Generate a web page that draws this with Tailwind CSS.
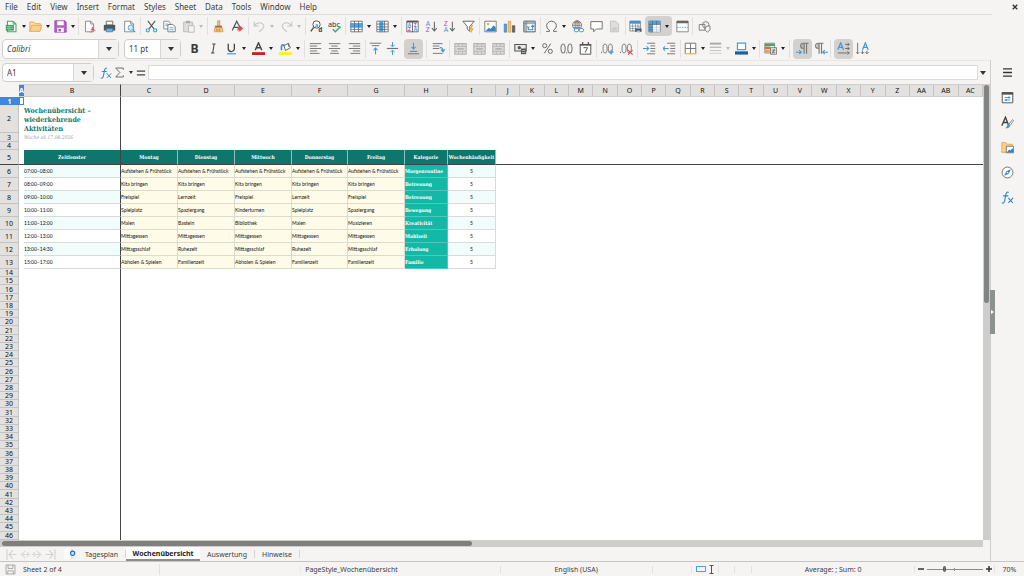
<!DOCTYPE html>
<html lang="de">
<head>
<meta charset="utf-8">
<title>Wochenübersicht</title>
<script src="https://cdn.jsdelivr.net/npm/@tailwindcss/browser@4"></script>
</head>
<body class="h-screen overflow-hidden flex flex-col bg-[#f5f4f2] text-[#3d3d3d] font-['Noto_Sans',sans-serif] text-[8px] leading-none">

<svg class="hidden" fill="none">
  <defs>
    <symbol id="new" viewBox="0 0 16 16"><path d="M3 1.500h7l3.500 3.500v9.500H3z" fill="#fff" stroke="#4ba36a" stroke-width="1.300"/><path d="M10 1.500V5h3.500" fill="none" stroke="#4ba36a" stroke-width="1.200"/><path d="M1 6h10v7H1z" fill="#3f9d63"/><path d="M2 8.200h8M2 10.500h8M5 7v5" stroke="#b9e6c8" stroke-width=".7"/></symbol>
    <symbol id="open" viewBox="0 0 16 16"><path d="M1 14V2.500h5l1.500 2H14V6" fill="#fbe0ad" stroke="#e2a448"/><path d="M1 14 3.500 6.500H16L13.500 14z" fill="#fbd08a" stroke="#e2a448"/></symbol>
    <symbol id="save" viewBox="0 0 16 16"><path d="M1 1h12.500L15 2.500V15H1z" fill="#b45fc6" stroke="#9a48ae"/><path d="M4 1.500h8v5H4z" fill="#fff"/><path d="M4 9.500h8V15H4z" fill="#fff"/><path d="M5.500 11h3v3h-3z" fill="#9a48ae"/></symbol>
    <symbol id="pdf" viewBox="0 0 16 16"><path d="M3 1.500h6.500L13 5v9.500H3z" fill="#fff" stroke="#777"/><path d="M9.500 1.500V5H13" fill="none" stroke="#777"/><path d="M9.500 15.500c2-2 2.500-4 2-7M9.500 11.500c2-.5 4 0 5.500 2" fill="none" stroke="#d9434e" stroke-width="1.200"/></symbol>
    <symbol id="print" viewBox="0 0 16 16"><path d="M4 1.500h8V6H4z" fill="#fff" stroke="#555"/><path d="M1 6h14v7H1z" fill="#555"/><path d="M4 10.500h8v4H4z" fill="#67b5ea" stroke="#3b7fb4"/></symbol>
    <symbol id="preview" viewBox="0 0 16 16"><path d="M2 1.500h7.500L13 5v9.500H2z" fill="#fff" stroke="#777"/><path d="M9.500 1.500V5H13" fill="none" stroke="#777"/><circle cx="9.500" cy="9.500" r="3.200" fill="#d6ecfa" stroke="#3a9bdc"/><path d="m12 12 3 3" stroke="#3a9bdc" stroke-width="1.500"/></symbol>
    <symbol id="cut" viewBox="0 0 16 16"><path d="M3.500 1 11 11M12.500 1 5 11" stroke="#555" stroke-width="1.300"/><circle cx="3.500" cy="12.700" r="2" fill="none" stroke="#3a9bdc" stroke-width="1.300"/><circle cx="12.500" cy="12.700" r="2" fill="none" stroke="#3a9bdc" stroke-width="1.300"/></symbol>
    <symbol id="copy" viewBox="0 0 16 16"><path d="M1 1.500h6L9 4v7H1z" fill="#fff" stroke="#777"/><path d="M6 5.500h6L15 8v6.500H6z" fill="#fff" stroke="#666"/><path d="M3 5h3M3 7h3" stroke="#3a9bdc"/><path d="M8 9.500h5M8 12h5" stroke="#3a9bdc"/></symbol>
    <symbol id="paste" viewBox="0 0 16 16"><path d="M2 2.500h11v12H2z" fill="#dededd" stroke="#b5b5b5"/><path d="M5 1h5v3H5z" fill="#aaa"/><path d="M8 7h7v8H8z" fill="#f3f3f3" stroke="#b5b5b5"/></symbol>
    <symbol id="clone" viewBox="0 0 16 16"><path d="M7 1h2.500v6H7z" fill="#f3c98c" stroke="#c27b2b" stroke-width=".8"/><path d="M3.500 7h9v2.500h-9z" fill="#777"/><path d="M3.500 9.500h9l1 5h-11z" fill="#f9c475" stroke="#d98a32" stroke-width=".8"/><path d="M6 11v3M9 11v3" stroke="#c2662b"/></symbol>
    <symbol id="clear" viewBox="0 0 16 16"><path d="M1.500 13 7 1.500 11 9M4 9h5.500" fill="none" stroke="#555" stroke-width="1.500"/><path d="m7.500 11 4-3.500L15 10l-4 4z" fill="#e5484d"/><path d="m7.500 11 3.500 3-1 1-3-2.500z" fill="#f6a7a9"/></symbol>
    <symbol id="undo" viewBox="0 0 16 16"><path d="M1.500 2v5.500H7M1.500 7.500C4 3 9 2.500 11.500 4.500c4 3 1 6-4 10" fill="none" stroke="#c6c5c3" stroke-width="1.300"/></symbol>
    <symbol id="redo" viewBox="0 0 16 16"><path d="M14.500 2v5.500H9M14.500 7.500C12 3 7 2.500 4.500 4.500c-4 3-1 6 4 10" fill="none" stroke="#c6c5c3" stroke-width="1.300"/></symbol>
    <symbol id="find" viewBox="0 0 16 16"><circle cx="8" cy="5.500" r="4.500" fill="#fff" stroke="#555" stroke-width="1.200"/><path d="M4.500 9 1 14" stroke="#555" stroke-width="1.800"/><text x="5.800" y="8" font-size="7" fill="#3a9bdc" font-weight="bold">a</text><text x="10" y="15" font-size="8" fill="#444" font-weight="bold">d</text></symbol>
    <symbol id="spell" viewBox="0 0 16 16"><text x="0" y="8" font-size="9" fill="#333">abc</text><path d="m6 11.500 3 3L15.500 8" fill="none" stroke="#3fae6b" stroke-width="1.800"/></symbol>
    <symbol id="row" viewBox="0 0 16 16"><path d="M1 1.500h14v13H1zM1 11.500h14M5.500 1v14M10.500 1v14M1 4.500h14" fill="#fff" stroke="#666"/><path d="M0 5h16v4.500H0z" fill="#4aa3df"/><path d="M5.500 5v4.500M10.500 5v4.500" stroke="#2a76ad"/></symbol>
    <symbol id="col" viewBox="0 0 16 16"><path d="M1 1.500h14v13H1zM1 8.500h14M1 11.500h14M10.500 1v14M1 5h14" fill="#fff" stroke="#666"/><path d="M4 1h5v14H4z" fill="#4aa3df"/><path d="M4 5h5M4 8.500h5M4 11.500h5" stroke="#2a76ad"/></symbol>
    <symbol id="sort" viewBox="0 0 16 16"><path d="M1 1.500h14v13H1z" fill="#fff" stroke="#555"/><path d="M1 1h14v2H1zM7.500 3h1v12h-1z" fill="#555"/><g font-size="6" font-weight="bold"><text x="2.200" y="8.500" fill="#3a9bdc">A</text><text x="2.400" y="14" fill="#b04cc0">Z</text><text x="9.600" y="8.500" fill="#b04cc0">Z</text><text x="9.500" y="14" fill="#3a9bdc">A</text></g></symbol>
    <symbol id="asc" viewBox="0 0 16 16"><g font-size="8.500"><text x="1" y="7" fill="#3a9bdc">A</text><text x="1" y="15" fill="#b04cc0">Z</text></g><path d="M11.500 2v11M8.500 10l3 3.500 3-3.500" fill="none" stroke="#666" stroke-width="1.300"/></symbol>
    <symbol id="desc" viewBox="0 0 16 16"><g font-size="8.500"><text x="1" y="7" fill="#b04cc0">Z</text><text x="1" y="15" fill="#3a9bdc">A</text></g><path d="M11.500 2v11M8.500 10l3 3.500 3-3.500" fill="none" stroke="#666" stroke-width="1.300"/></symbol>
    <symbol id="filter" viewBox="0 0 16 16"><path d="M1 1.500h14L9.500 8v6L6.500 11V8z" fill="#fff" stroke="#666" stroke-width="1.200"/><path d="m13 6-3 5h3l-2 4.500" fill="none" stroke="#eda33b" stroke-width="1.500"/></symbol>
    <symbol id="image" viewBox="0 0 16 16"><path d="M1 1.500h14v13H1z" fill="#fff" stroke="#666"/><path d="m2 13.500 4-4 2 1.500 4-4.500 2.500 3v4z" fill="#2f86cc"/><circle cx="5" cy="5" r="1.500" fill="#f0a646"/></symbol>
    <symbol id="chart" viewBox="0 0 16 16"><path d="M1.500 5h3v10h-3z" fill="#4aa3df" stroke="#2a76ad" stroke-width=".7"/><path d="M6.500 1.500h3V15h-3z" fill="#f9c475" stroke="#d98a32" stroke-width=".7"/><path d="M11.500 7h3v8h-3z" fill="#666" stroke="#444" stroke-width=".7"/></symbol>
    <symbol id="pivot" viewBox="0 0 16 16"><path d="M1 1.500h14v13H1z" fill="#fff" stroke="#666"/><path d="M1 1h14v3H1zM1 4h3v11H1z" fill="#9bb8cb"/><path d="M1 1.500h14v13H1zM1 4.500h14M4.500 1v14" fill="none" stroke="#777" stroke-width=".8"/><path d="M6.500 9.500V12H12V7M10 8.500l2-2 2 2M8 8 6.500 9.500 5 8" fill="none" stroke="#3a8fd0" stroke-width="1.300"/></symbol>
    <symbol id="omega" viewBox="0 0 16 16"><path d="M1.500 14h4v-1.500C3 11 2 9 2 7a6 5.500 0 0 1 12 0c0 2-1 4-3.500 5.500V14h4" fill="none" stroke="#666" stroke-width="1.200"/></symbol>
    <symbol id="link" viewBox="0 0 16 16"><circle cx="7.500" cy="6.500" r="5.500" fill="#fff" stroke="#666"/><path d="M2 6.500h11M3 3.500h9M3 9.500h9M7.500 1v11" stroke="#666" stroke-width=".9"/><ellipse cx="7.500" cy="6.500" rx="2.500" ry="5.500" fill="none" stroke="#666"/><rect x="4" y="10.500" width="5.500" height="4" rx="2" fill="#fff" stroke="#3a9bdc" stroke-width="1.200"/><rect x="10" y="10.500" width="5.500" height="4" rx="2" fill="#fff" stroke="#3a9bdc" stroke-width="1.200"/></symbol>
    <symbol id="comment" viewBox="0 0 16 16"><path d="M1 2h14v9H8l-3.500 3.500V11H1z" fill="#fff" stroke="#666" stroke-width="1.100"/></symbol>
    <symbol id="page" viewBox="0 0 16 16"><path d="M3 1.500h6.500L13 5v9.500H3z" fill="#dededd" stroke="#bcbcbb"/><path d="M5 10h6M5 12h6" stroke="#bcbcbb"/></symbol>
    <symbol id="headers" viewBox="0 0 16 16"><path d="M1 1.500h13v12H1z" fill="#fff" stroke="#777"/><path d="M1 1h13v3.500H1z" fill="#3f93d4"/><path d="M1 7.500h13M1 10.500h13M4.500 1v13M8 1v13M11 1v13" stroke="#6f8da5" stroke-width=".9"/><path d="M7.500 10.500h8v4h-8z" fill="#555"/><path d="M9.500 8.500h4v2h-4zM9.500 13h4v2.500h-4z" fill="#9bcbeb"/></symbol>
    <symbol id="freeze" viewBox="0 0 16 16"><path d="M1 1.500h14v13H1z" fill="#fff" stroke="#666"/><path d="M1 1h14v4.500H1zM1 1h4.500v14H1z" fill="#4aa3df"/><path d="M5.500 1v14M1 5.500h14M10.500 1v14M1 9h14M1 12h14" stroke="#456f8e" stroke-width=".9"/><path d="M6 6h9v9H6z" fill="#fff" opacity=".6"/></symbol>
    <symbol id="split" viewBox="0 0 16 16"><path d="M1 1.500h14v13H1z" fill="#fff" stroke="#777"/><path d="M1 1h14v3H1z" fill="#666"/><path d="M1 9h14" stroke="#3a9bdc" stroke-dasharray="2 1.200"/></symbol>
    <symbol id="shapes" viewBox="0 0 16 16"><path d="M1.500 5.500h7v7h-7z" fill="#f5f4f2" stroke="#777" stroke-width="1.100"/><circle cx="9.500" cy="6" r="4" fill="none" stroke="#777" stroke-width="1.100"/><path d="m10 8 4.500-1 .5 5-3.500 3-3-3z" fill="#f5f4f2" stroke="#777" stroke-width="1.100"/></symbol>
    <symbol id="bold" viewBox="0 0 16 16"><text x="3" y="14" font-size="15" font-weight="bold" fill="#3a3a3a">B</text></symbol>
    <symbol id="italic" viewBox="0 0 16 16"><path d="M6.500 2.500h4M5 13.500h4M8.800 2.500 7 13.500" fill="none" stroke="#444" stroke-width="1.300"/></symbol>
    <symbol id="underline" viewBox="0 0 16 16"><path d="M4 2v6a3.500 3.500 0 0 0 7.500 0V2" fill="none" stroke="#444" stroke-width="1.600"/><path d="M2.500 14.500h11" stroke="#3a9bdc" stroke-width="1.400"/></symbol>
    <symbol id="fontcolor" viewBox="0 0 16 16"><path d="M4 10 8 1l4 9M5.500 7h5" fill="none" stroke="#444" stroke-width="1.700"/><path d="M0 12.500h16V16H0z" fill="#c9211e"/></symbol>
    <symbol id="highlight" viewBox="0 0 16 16"><path d="M6 4.500 11 2l3 5-6 3.500z" fill="#fff" stroke="#555" stroke-width="1.100"/><path d="M3 10V5.500C3 3 6 3 7 5" fill="none" stroke="#3a8fd0" stroke-width="1.900"/><path d="M12 1v5" stroke="#555"/><path d="M0 12.500h16V16H0z" fill="#fdf212"/></symbol>
    <symbol id="left" viewBox="0 0 16 16"><path d="M1 2h14M1 5h9M1 8h14M1 11h9M1 14h12" stroke="#777" stroke-width="1.200"/></symbol>
    <symbol id="center" viewBox="0 0 16 16"><path d="M1 2h14M4 5h8M1 8h14M4 11h8M2.500 14h11" stroke="#777" stroke-width="1.200"/></symbol>
    <symbol id="right" viewBox="0 0 16 16"><path d="M1 2h14M6 5h9M1 8h14M6 11h9M3 14h12" stroke="#777" stroke-width="1.200"/></symbol>
    <symbol id="top" viewBox="0 0 16 16"><path d="M1 1.500h14M3.500 4.500h9" stroke="#777" stroke-width="1.200"/><path d="M8 15V7.500M5.500 10 8 7.500l2.500 2.500" fill="none" stroke="#3a9bdc" stroke-width="1.300"/></symbol>
    <symbol id="middle" viewBox="0 0 16 16"><path d="M1 8h14" stroke="#777" stroke-width="1.500"/><path d="M8 0v5.500M5.500 3.500 8 6l2.500-2.500M8 16v-5.500M5.500 12.500 8 10l2.500 2.500" fill="none" stroke="#3a9bdc" stroke-width="1.200"/></symbol>
    <symbol id="bottom" viewBox="0 0 16 16"><path d="M1 14.500h14M3.500 11.500h9" stroke="#777" stroke-width="1.200"/><path d="M8 1v7.500M5.500 6 8 8.500 10.500 6" fill="none" stroke="#3a9bdc" stroke-width="1.300"/></symbol>
    <symbol id="wrap" viewBox="0 0 16 16"><path d="M1 2h12M1 5h8M1 8h8M1 14h12" stroke="#777" stroke-width="1.200"/><path d="M9.500 7c3-.5 4 1.500 4 4.500M11 9.500l2.500 2.500 2-3" fill="none" stroke="#3a9bdc" stroke-width="1.400"/></symbol>
    <symbol id="merge" viewBox="0 0 16 16"><path d="M1 2h14v13H1z" fill="#dcdbd9" stroke="#b5b4b2" stroke-width="1.300"/><path d="M1 5.500h14M1 11.500h14M5.500 2v3.500M10.500 2v3.500M5.500 11.500V15M10.500 11.500V15" stroke="#b5b4b2"/><path d="M4 8.500h8" stroke="#a5a4a2" stroke-width="1.500"/></symbol>
    <symbol id="currency" viewBox="0 0 16 16"><path d="M1 3h14v8H1z" fill="#e9e9e8" stroke="#555" stroke-width="1.300"/><circle cx="6.500" cy="7" r="2" fill="#555"/><path d="M8.500 8h6.500v7H8.500z" fill="#555"/><path d="M9.500 10.500h4.500M9.500 13h4.500" stroke="#ddd" stroke-width=".8"/></symbol>
    <symbol id="percent" viewBox="0 0 16 16"><circle cx="4.500" cy="4.500" r="2.500" fill="none" stroke="#666" stroke-width="1.200"/><circle cx="11.500" cy="11.500" r="2.500" fill="none" stroke="#666" stroke-width="1.200"/><path d="M12 2 4 14" stroke="#666" stroke-width="1.200"/></symbol>
    <symbol id="number" viewBox="0 0 16 16"><ellipse cx="3.800" cy="8" rx="2.600" ry="5.500" fill="none" stroke="#777" stroke-width="1.300"/><ellipse cx="12.200" cy="8" rx="2.600" ry="5.500" fill="none" stroke="#777" stroke-width="1.300"/><path d="M7.500 12.500h1.300V14H7.500z" fill="#777"/></symbol>
    <symbol id="date" viewBox="0 0 16 16"><path d="M1.500 3h13v12h-13z" fill="#fff" stroke="#555" stroke-width="1.200"/><path d="M1 2.500h14v2H1z" fill="#555"/><path d="M4.500 0v4M11.500 0v4" stroke="#555" stroke-width="1.500"/><path d="M5.500 7h5L7.500 13" fill="none" stroke="#555" stroke-width="1.200"/></symbol>
    <symbol id="adddec" viewBox="0 0 16 16"><path d="M0 12h1.300v1.500H0z" fill="#777"/><ellipse cx="5" cy="8" rx="2.500" ry="5.500" fill="none" stroke="#777" stroke-width="1.200"/><ellipse cx="11.500" cy="8" rx="2.500" ry="5.500" fill="none" stroke="#777" stroke-width="1.200"/><path d="M9.500 12.500h6M12.500 9.500v6" stroke="#3a9bdc" stroke-width="1.500"/></symbol>
    <symbol id="deldec" viewBox="0 0 16 16"><path d="M0 12h1.300v1.500H0z" fill="#777"/><ellipse cx="5" cy="8" rx="2.500" ry="5.500" fill="none" stroke="#777" stroke-width="1.200"/><ellipse cx="11.500" cy="8" rx="2.500" ry="5.500" fill="none" stroke="#777" stroke-width="1.200"/><path d="m10 10 5.500 5.500M15.500 10 10 15.500" stroke="#e5484d" stroke-width="1.400"/></symbol>
    <symbol id="indent" viewBox="0 0 16 16"><path d="M5 1.500h10M9 4.800h6M9 8h6M9 11.200h6M5 14.500h10" stroke="#777" stroke-width="1.200"/><path d="M0 8h7M4.500 5.500 7 8l-2.500 2.500" fill="none" stroke="#3a9bdc" stroke-width="1.300"/></symbol>
    <symbol id="outdent" viewBox="0 0 16 16"><path d="M5 1.500h10M9 4.800h6M9 8h6M9 11.200h6M5 14.500h10" stroke="#777" stroke-width="1.200"/><path d="M7 8H0M2.500 5.500 0 8l2.500 2.500" fill="none" stroke="#3a9bdc" stroke-width="1.300"/></symbol>
    <symbol id="borders" viewBox="0 0 16 16"><path d="M1.500 14.500v-13h13v13" fill="#fff" stroke="#777" stroke-width="1.200"/><path d="M8 1.500v13M1.500 8h13" stroke="#777" stroke-width="1.200"/><path d="M1 14.500h14" stroke="#eda33b" stroke-width="1.300"/></symbol>
    <symbol id="lines" viewBox="0 0 16 16"><path d="M1 2h14" stroke="#aaa" stroke-width="2.400"/><path d="M1 6.500h14" stroke="#b5b5b5" stroke-width="1.500"/><path d="M1 10.500h14" stroke="#bbb"/><path d="M1 14h14" stroke="#bbb" stroke-dasharray="2 1"/></symbol>
    <symbol id="bordercolor" viewBox="0 0 16 16"><path d="M3 1.500h10v8H3z" fill="#fff" stroke="#4a9bd6" stroke-width="1.500"/><path d="M0 11.500h16v4H0z" fill="#1f5f9e"/></symbol>
    <symbol id="cond" viewBox="0 0 16 16"><path d="M1 1.500h12v12H1z" fill="#fff" stroke="#777"/><path d="M1 2h12v3H1z" fill="#4ba36a"/><path d="M1 5.500h7v3.500H1z" fill="#e5654d"/><path d="M1 9.500h6V13H1z" fill="#eda33b"/><path d="M8 7h7.500v8H8z" fill="#eee" stroke="#666"/><path d="M9.500 10h4.500M9.500 12.500h4.500M13 8.500l-2.500 5.500" stroke="#555" stroke-width=".9"/></symbol>
    <symbol id="ltr" viewBox="0 0 16 16"><path d="M15.500 1.500H9a3.200 3.200 0 0 0 0 6.500h1M10 2v12.500M13 2v12.500" fill="none" stroke="#777" stroke-width="1.400"/><path d="M8 2h2v6H8z" fill="#999"/><path d="M0 12.500h6.500M4 10l2.500 2.500L4 15" fill="none" stroke="#3a9bdc" stroke-width="1.300"/></symbol>
    <symbol id="rtl" viewBox="0 0 16 16"><path d="M10.500 1.500H4A3.200 3.200 0 0 0 4 8h1M5 2v12.500M8 2v12.500" fill="none" stroke="#777" stroke-width="1.400"/><path d="M3 2h2v6H3z" fill="#999"/><path d="M16 12.500H9.500M12 10l-2.500 2.500L12 15" fill="none" stroke="#3a9bdc" stroke-width="1.300"/></symbol>
    <symbol id="horiz" viewBox="0 0 16 16"><path d="M1 9.500 4.500 1 8 9.500M2.500 6.500h4" fill="none" stroke="#3a9bdc" stroke-width="1.500"/><path d="M10 3h5M10 8h5M1 13.500h14M13 1l2 2-2 2M13 6l2 2-2 2M13 11.500l2 2-2 2" fill="none" stroke="#666" stroke-width="1.100"/></symbol>
    <symbol id="vert" viewBox="0 0 16 16"><path d="M8 9.500 11.500 1 15 9.500M9.500 6.500h4" fill="none" stroke="#3a9bdc" stroke-width="1.500"/><path d="M2 1v13.500M8 10.500v4M13.500 10.500v4M0 12.500l2 2 2-2M6 12.500l2 2 2-2M11.500 12.500l2 2 2-2" fill="none" stroke="#666" stroke-width="1.100"/></symbol>
    <symbol id="fx" viewBox="0 0 16 16"><path d="M9.500 1.800C7.500.5 6.500 2 6 4.500L4.500 12c-.5 2.500-1.500 3.500-3.500 2.500M2.500 6H9" fill="none" stroke="#2f86cc" stroke-width="1.400"/><path d="m9 8.500 5.500 6M15 8.500l-6 6" stroke="#2f86cc" stroke-width="1.300"/></symbol>
    <symbol id="sigma" viewBox="0 0 16 16"><path d="M13.500 4V1.500H2.500L8.500 8l-6 6.500h11V12" fill="none" stroke="#555" stroke-width="1.200"/></symbol>
    <symbol id="equals" viewBox="0 0 16 16"><path d="M2.500 5.500h11M2.500 10.500h11" stroke="#444" stroke-width="1.800"/></symbol>
    <symbol id="menu" viewBox="0 0 16 16"><path d="M2.500 3.500h11M2.500 8h11M2.500 12.500h11" stroke="#333" stroke-width="1.700"/></symbol>
    <symbol id="properties" viewBox="0 0 16 16"><path d="M1.500 2h13v12.500h-13z" fill="#fff" stroke="#555" stroke-width="1.200"/><path d="M1 1.500h14v3H1z" fill="#555"/><path d="M4.500 8h7M4.500 11h7" stroke="#3a9bdc" stroke-width="1.200"/><path d="M9 6.700h1.500v2.600H9zM5.500 9.700H7v2.600H5.500z" fill="#2f86cc"/></symbol>
    <symbol id="styles" viewBox="0 0 16 16"><path d="M1 12 5.500 1.500 9.500 12M3 8h5" fill="none" stroke="#444" stroke-width="1.700"/><path d="m9.500 10.500 4.500-6 1.500 1-4 6z" fill="#fff" stroke="#666" stroke-width=".9"/><path d="M4.500 15c3 0 2-4 5-4.500 2 .5 2 2.500.5 3.500-1.500 1-3.500 1-5.500 1z" fill="#3a9bdc"/></symbol>
    <symbol id="gallery" viewBox="0 0 16 16"><path d="M1 14V2h5l1.500 2H14v10z" fill="#fbd08a" stroke="#e2a448"/><path d="M6.500 6.500h9v8h-9z" fill="#fff" stroke="#666"/><path d="m7 14 3-3.500 1.500 1.200L14 9l1 1.200V14z" fill="#2f86cc"/></symbol>
    <symbol id="navigator" viewBox="0 0 16 16"><circle cx="8" cy="8" r="6.700" fill="#fff" stroke="#666" stroke-width="1.100"/><path d="M12 4 9.500 9.500 4 12l2.500-5.500z" fill="#2f86cc"/><circle cx="8" cy="8" r="1" fill="#fff"/></symbol>
    <symbol id="first" viewBox="0 0 16 16"><path d="M2.500 1.500v13M14 8H5M9.500 3 5 8l4.500 5" fill="none" stroke="#d3d2d0" stroke-width="1.400"/></symbol>
    <symbol id="prev" viewBox="0 0 16 16"><path d="M15 8H4M9 3.500 4 8l5 4.500M12 5v6" fill="none" stroke="#d9d8d6" stroke-width="1.400"/></symbol>
    <symbol id="next" viewBox="0 0 16 16"><path d="M1 8h11M7 3.500 12 8l-5 4.500M4 5v6" fill="none" stroke="#d9d8d6" stroke-width="1.400"/></symbol>
    <symbol id="last" viewBox="0 0 16 16"><path d="M13.500 1.500v13M2 8h9M6.500 3 11 8l-4.500 5" fill="none" stroke="#d3d2d0" stroke-width="1.400"/></symbol>
    <symbol id="addsheet" viewBox="0 0 16 16"><path d="M0 1h10v14H0z" fill="#fff"/><path d="M10.500 1v14" stroke="#c3c9ce" stroke-width="1.200"/><circle cx="11.500" cy="7" r="2.800" fill="#cfe3f4" stroke="#2a6fb5" stroke-width="1.500"/></symbol>
    <symbol id="disk" viewBox="0 0 16 16"><path d="M1.500 1.500h13v13h-13zM4.500 1.500v5h7v-5M4 14.500V10h8v4.500" fill="none" stroke="#9a9a99" stroke-width="1.200"/></symbol>
  </defs>
</svg>

<nav class="h-[14px] shrink-0 flex items-center pl-[5px] pr-1.5" aria-label="Menu">
  <div id="menus" class="flex items-center gap-[9px]"></div>
  <button aria-label="Close" class="ml-auto text-[#333]"><svg class="size-1.5" viewBox="0 0 8 8"><path d="m1 1 6 6M7 1 1 7" stroke="currentColor" stroke-width="1.800"/></svg></button>
</nav>

<div id="standard" class="h-[23px] shrink-0 flex items-center pl-0.5 border-t border-[#dedddb] mr-8" role="toolbar" aria-label="Standard"></div>

<div class="h-[23px] shrink-0 flex items-center pl-0.5">
  <div class="flex h-5 w-[117px] border border-[#cfcecc] rounded-sm bg-white">
    <input aria-label="Font Name" value="Calibri" class="min-w-0 flex-1 px-1 italic text-[8px]">
    <button aria-label="Font list" class="w-5 grid place-items-center bg-[#f3f2f0] border-l border-[#d8d7d5]"><svg class="w-1.5 h-1" viewBox="0 0 6 4"><path d="M0 0h6L3 4z" fill="#333"/></svg></button>
  </div>
  <div class="ml-[5px] flex h-5 w-[57px] border border-[#cfcecc] rounded-sm bg-white">
    <input aria-label="Font Size" value="11 pt" class="min-w-0 flex-1 px-1 text-[8px]">
    <button aria-label="Size list" class="w-5 grid place-items-center bg-[#f3f2f0] border-l border-[#d8d7d5]"><svg class="w-1.5 h-1" viewBox="0 0 6 4"><path d="M0 0h6L3 4z" fill="#333"/></svg></button>
  </div>
  <div id="formatting" class="ml-[3px] flex items-center" role="toolbar" aria-label="Formatting"></div>
</div>

<div class="flex-1 min-h-0 flex">
  <main class="flex-1 min-w-0 flex flex-col">
    <div class="h-6 shrink-0 flex items-center pl-0.5 pr-1 border-t border-[#e9e8e6]">
      <div class="flex h-[19px] w-[92px] border border-[#cfcecc] rounded-sm bg-white">
        <input aria-label="Name Box" value="A1" class="min-w-0 flex-1 px-1 text-[8px]">
        <button aria-label="Named ranges" class="w-5 grid place-items-center bg-[#f3f2f0] border-l border-[#d8d7d5]"><svg class="w-1.5 h-1" viewBox="0 0 6 4"><path d="M0 0h6L3 4z" fill="#333"/></svg></button>
      </div>
      <button aria-label="Function Wizard" class="ml-1.5"><svg class="size-3"><use href="#fx"/></svg></button>
      <button aria-label="Select Function" class="ml-0.5 flex items-center gap-1"><svg class="size-[11px]"><use href="#sigma"/></svg><svg class="w-1 h-[3px]" viewBox="0 0 4 3"><path d="M0 0h4L2 3z" fill="#333"/></svg></button>
      <button aria-label="Formula" class="ml-0.5"><svg class="size-3"><use href="#equals"/></svg></button>
      <input aria-label="Input line" class="ml-px flex-1 min-w-0 h-[15px] bg-white border border-[#dcdbd9]">
      <button aria-label="Expand Formula Bar" class="ml-0.5"><svg class="w-1.5 h-1" viewBox="0 0 6 4"><path d="M0 0h6L3 4z" fill="#333"/></svg></button>
    </div>
    <div class="flex-1 min-h-0 flex">
      <div class="flex-1 min-w-0 overflow-hidden bg-white">
        <table class="w-full h-full table-fixed border-separate border-spacing-0 text-[5px] whitespace-nowrap text-[#111] font-['Lato',sans-serif]">
          <colgroup id="cols"></colgroup>
          <thead><tr id="letters" class="h-[13px]"></tr></thead>
          <tbody id="rows"></tbody>
        </table>
      </div>
      <div class="w-[7px] shrink-0 bg-[#cdcdcc] px-px pt-px"><div class="h-[48%] rounded-sm bg-[#808584]"></div></div>
    </div>
    <div class="h-[7px] shrink-0 flex mr-[7px] bg-[#cdcdcc] px-0.5 py-px"><div class="w-[48%] rounded-sm bg-[#7f7f7e]"></div></div>
    <div class="h-[14px] shrink-0 flex items-stretch text-[7px]">
      <div class="flex items-center pl-[5px] w-16">
        <button aria-label="First Sheet"><svg class="size-[13px]"><use href="#first"/></svg></button>
        <button aria-label="Previous Sheet"><svg class="size-[13px]"><use href="#prev"/></svg></button>
        <button aria-label="Next Sheet"><svg class="size-[13px]"><use href="#next"/></svg></button>
        <button aria-label="Last Sheet"><svg class="size-[13px]"><use href="#last"/></svg></button>
      </div>
      <button aria-label="Add Sheet" class="w-[14px]"><svg class="size-3"><use href="#addsheet"/></svg></button>
      <div class="w-12 flex items-center justify-between"><span></span><button>Tagesplan</button><span class="h-2 border-r border-[#d5d4d2]"></span></div>
      <button class="w-[74px] font-bold bg-white border-b-2 border-[#8c8c8b] text-[#222]">Wochenübersicht</button>
      <div class="w-[55px] flex items-center justify-between"><span></span><button>Auswertung</button><span class="h-2 border-r border-[#d5d4d2]"></span></div>
      <div class="w-[45px] flex items-center justify-between"><span></span><button>Hinweise</button><span class="h-2 border-r border-[#d5d4d2]"></span></div>
    </div>
  </main>
  <aside class="relative w-[34px] shrink-0 border-l border-[#cfcecc]" aria-label="Sidebar">
    <div id="decks" class="flex flex-col items-center gap-3 pt-1.5"></div>
    <button aria-label="Hide sidebar" class="absolute -left-px top-[46%] w-[5px] h-11 bg-[#8d9291] grid place-items-center"><svg class="w-[3px] h-1" viewBox="0 0 3 4"><path d="M0 0v4l3-2z" fill="#fff"/></svg></button>
  </aside>
</div>

<footer class="h-[15px] shrink-0 flex items-center border-t border-[#c6c5c3] text-[7px]">
  <div class="w-40 flex items-center gap-[7px] pl-[5px] border-r border-[#e2e1df]"><svg class="size-[11px]"><use href="#disk"/></svg>Sheet 2 of 4</div>
  <div class="flex-[142] border-r border-[#e9e8e6]">&nbsp;</div>
  <div class="flex-[197] pl-1 border-r border-[#e2e1df]">PageStyle_Wochenübersicht</div>
  <div class="flex-[153] text-center border-r border-[#e2e1df]">English (USA)</div>
  <div class="flex-[39] border-r border-[#e2e1df]">&nbsp;</div>
  <div class="w-[27px] flex justify-center items-center gap-[3px] border-r border-[#e2e1df]"><span class="w-[10px] h-1.5 border border-[#4aa3df]"></span><svg class="w-[5px] h-[9px]" viewBox="0 0 5 9"><path d="M.5.500h4M.5 8.500h4M2.500.500v8" stroke="#555" fill="none"/></svg></div>
  <div class="w-4 border-r border-[#e2e1df]">&nbsp;</div>
  <div class="w-[17px] border-r border-[#e2e1df]">&nbsp;</div>
  <div class="flex-[164] text-center border-r border-[#e2e1df]">Average: ; Sum: 0</div>
  <div class="w-20 flex items-center justify-center gap-[3px] border-r border-[#e2e1df]">
    <button aria-label="Zoom Out"><svg class="w-1.5 h-1.5" viewBox="0 0 6 6"><path d="M0 3h6" stroke="#333" stroke-width="1.500"/></svg></button>
    <div class="relative w-14 h-2 flex items-center">
      <span class="w-full h-px bg-[#8a8a89]"></span>
      <input type="range" aria-label="Zoom" min="20" max="400" value="70" class="absolute inset-0 w-full opacity-0">
      <span class="absolute left-4 w-[3px] h-1.5 rounded-sm bg-[#777] border border-[#555]"></span>
      <span class="absolute left-[27px] w-px h-[3px] bg-[#8a8a89]"></span>
    </div>
    <button aria-label="Zoom In"><svg class="w-1.5 h-1.5" viewBox="0 0 6 6"><path d="M0 3h6M3 0v6" stroke="#333" stroke-width="1.500"/></svg></button>
  </div>
  <div class="w-[29px] text-center">70%</div>
</footer>

<script>
const $ = id => document.getElementById(id);
$('menus').innerHTML = ['File','Edit','View','Insert','Format','Styles','Sheet','Data','Tools','Window','Help']
  .map(m => `<button>${m}</button>`).join('');

// A trailing "+" adds a drop-down arrow, "-" a disabled arrow, "!" marks a pressed button.
const arrow = c => `<svg class="w-1 h-[3px]" viewBox="0 0 4 3"><path d="M0 0h4L2 3z" fill="${c}"/></svg>`;
const button = spec => {
  const name = spec.replace(/[^a-z]/g, '');
  const look = spec.includes('!') ? 'h-5 px-[3px] flex items-center gap-1 rounded-sm bg-[#d3d1ce]' : 'h-5 flex items-center gap-1';
  return `<button aria-label="${name}" class="${look}"><svg class="size-[13px]"><use href="#${name}"/></svg>${
    spec.includes('+') ? arrow('#222') : spec.includes('-') ? arrow('#bbb') : ''}</button>`;
};
const toolbar = (id, groups) => $(id).innerHTML = groups.map(([w, icons]) =>
  `<div class="h-[18px] flex items-center justify-around border-r border-[#e1e0de] px-px last:border-0" style="width:${w}px">${icons.split(' ').map(button).join('')}</div>`).join('');
toolbar('standard', [[77,'new+ open+ save+'],[62,'pdf print preview'],[67,'cut copy paste-'],[41,'clone clear'],[57,'undo- redo-'],[40,'find spell'],[56,'row+ col+'],[78,'sort asc desc filter'],[61,'image chart pivot'],[85,'omega+ link comment page'],[67,'headers freeze+! split'],[22,'shapes']]);
toolbar('formatting', [[121,'bold italic underline+ fontcolor+ highlight+'],[61,'left center right'],[61,'top middle bottom!'],[23,'wrap'],[60,'merge merge merge'],[87,'currency+ percent number date'],[41,'adddec deldec'],[43,'indent outdent'],[79,'borders+ lines- bordercolor+'],[30,'cond+'],[41,'ltr! rtl'],[41,'horiz! vert']]);
$('decks').innerHTML = ['menu','properties','styles','gallery','navigator','fx']
  .map(n => `<button aria-label="${n}"><svg class="size-[13px]"><use href="#${n}"/></svg></button>`).join('');

const widths = [19, 5, 97, 57, 57, 57, 56, 57, 43, 48];
const letters = ['A','B','C','D','E','F','G','H','I','J','K','L','M','N','O','P','Q','R','S','T','U','V','W','X','Y','Z','AA','AB','AC'];
$('cols').innerHTML = [...widths.map(w => `<col style="width:${w}px">`), ...letters.slice(9).map(() => '<col>')].join('');
$('letters').innerHTML = `<td class="bg-[#f5f4f2]"></td>` + letters.map(l => {
  const tone = l === 'A' ? 'bg-[#3f86dc] text-white font-bold' : l === 'B' ? 'bg-[#e2e1df] border-r border-[#444] font-normal' : 'bg-[#e2e1df] border-r border-[#c4c3c1] font-normal';
  return `<th scope="col" class="p-0 border-t border-t-[#cfcecc] border-b border-b-[#cfcecc] text-[7px] leading-none font-['Noto_Sans',sans-serif] ${tone}">${l}</th>`;
}).join('');

const head = ['Zeitfenster','Montag','Dienstag','Mittwoch','Donnerstag','Freitag','Kategorie','Wochenhäufigkeit'];
const A = 'Aufstehen &amp; Frühstück', M = 'Mittagessen';
const data = [
  ['07:00–08:00',A,A,A,A,A,'Morgenroutine'],
  ['08:00–09:00','Kita bringen','Kita bringen','Kita bringen','Kita bringen','Kita bringen','Betreuung'],
  ['09:00–10:00','Freispiel','Lernzeit','Freispiel','Lernzeit','Freispiel','Betreuung'],
  ['10:00–11:00','Spielplatz','Spaziergang','Kinderturnen','Spielplatz','Spaziergang','Bewegung'],
  ['11:00–12:00','Malen','Basteln','Bibliothek','Malen','Musizieren','Kreativität'],
  ['12:00–13:00',M,M,M,M,M,'Mahlzeit'],
  ['13:00–14:30','Mittagsschlaf','Ruhezeit','Mittagsschlaf','Ruhezeit','Mittagsschlaf','Erholung'],
  ['15:00–17:00','Abholen &amp; Spielen','Familienzeit','Abholen &amp; Spielen','Familienzeit','Familienzeit','Familie'],
];
const rowHead = n => `<th scope="row" class="p-0 text-[7px] leading-none font-['Noto_Sans',sans-serif] ${
  n === 1 ? 'bg-[#3f86dc] text-white font-bold' : n === 5 ? 'bg-[#e2e1df] border-b border-b-[#444] border-r border-r-[#c4c3c1] font-normal' : 'bg-[#e2e1df] border-b border-r border-[#c4c3c1] font-normal'}">${n}</th>`;
const plain = (n, a = '', b = '') => `<td class="p-0${n === 1 ? ' border border-[#3f86dc]' : ''}">${a}</td><td class="p-0 border-r border-[#444]">${b}</td><td colspan="27" class="p-0"></td>`;
let html = '';
for (let n = 1; n <= 46; n++) {
  if (n === 2) html += `<tr class="h-7">${rowHead(n)}${plain(n, '', `<div class="whitespace-normal font-['DejaVu_Serif_Condensed','DejaVu_Serif',serif] font-bold text-[7px] leading-[9px] text-[#0f766e]">Wochenübersicht – wiederkehrende Aktivitäten</div>`)}</tr>`;
  else if (n === 3) html += `<tr class="h-[9px]">${rowHead(n)}${plain(n, '', `<div class="italic text-[5px] font-['DejaVu_Serif_Condensed','DejaVu_Serif',serif] text-[#94a3b8]">Woche ab 17.08.2026</div>`)}</tr>`;
  else if (n === 5) html += `<tr class="h-[15px]">${rowHead(n)}<td class="border-b border-[#444]"></td>${head.map((h, i) =>
    `<th scope="col" class="p-0 bg-[#0f766e] text-white font-bold text-[5px] font-['DejaVu_Serif_Condensed','DejaVu_Serif',serif] border-r border-b border-b-[#444] ${i === 0 ? 'border-r-[#444]' : 'border-r-[#8fc2bd]'}">${h}</th>`).join('')}<td colspan="20" class="border-b border-[#444]"></td></tr>`;
  else if (n >= 6 && n <= 13) {
    const r = data[n - 6], tint = n % 2 ? 'bg-white' : 'bg-[#f0fdfa]';
    html += `<tr class="h-[13px]">${rowHead(n)}<td></td>${r.map((v, i) =>
      i === 0 ? `<td class="p-0 border-r border-b border-b-[#d9dcdb] border-r-[#444] ${tint}">${v}</td>`
      : i < 6 ? `<td class="p-0 border-r border-b border-[#dcdbd0] bg-[#fefce8]">${v}</td>`
      : `<td class="p-0 border-r border-b border-[#4cc9bb] bg-[#14b8a6] text-white font-bold font-['DejaVu_Serif_Condensed','DejaVu_Serif',serif]">${v}</td>`).join('')}<td class="p-0 border-r border-b border-[#d9dcdb] text-center ${tint}">5</td><td colspan="20"></td></tr>`;
  } else html += `<tr class="${n === 1 || n === 4 ? 'h-2' : ''}">${rowHead(n)}${plain(n)}</tr>`;
}
$('rows').innerHTML = html;
</script>
</body>
</html>
